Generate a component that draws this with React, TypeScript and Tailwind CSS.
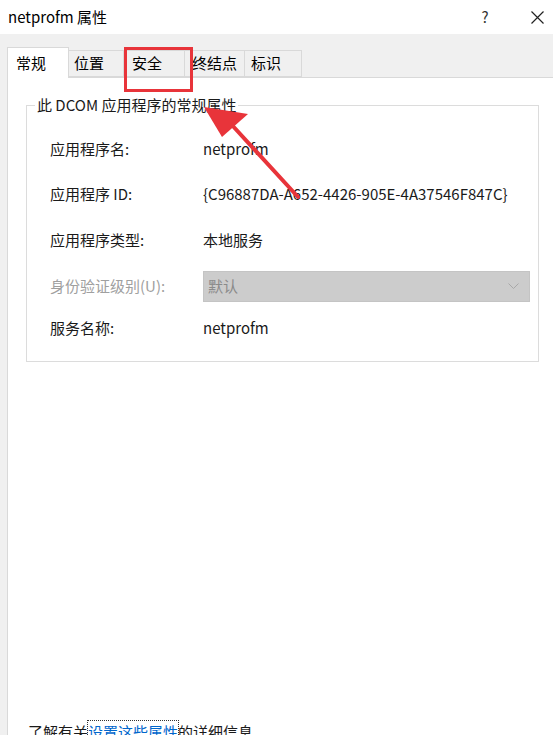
const font = {
  fontFamily: '"Noto Sans CJK SC", "Liberation Sans", sans-serif',
};

const Row = ({ label, value, h }: { label: string; value: string; h: string }) => (
  <div className={`flex items-center ${h}`}>
    <div className="w-[153px] text-[#1a1a1a]">{label}</div>
    <div className="text-[#1a1a1a]">{value}</div>
  </div>
);

const App = () => {
  return (
    <div className="w-[553px] h-[735px] overflow-hidden bg-white relative text-[15px]" style={font}>
      <div className="h-[34px] flex items-center pl-[8px] bg-white">
        <div className="flex-1 text-[15px] text-black">netprofm 属性</div>
        <div className="w-[30px] text-center text-[15px] text-[#333]">?</div>
        <div className="w-[30px] ml-[22px] mr-[1px] flex justify-center">
          <svg width="13" height="13" viewBox="0 0 13 13">
            <path d="M0.5 0.5 L12.5 12.5 M12.5 0.5 L0.5 12.5" stroke="#222" strokeWidth="1.2" />
          </svg>
        </div>
      </div>

      <div className="bg-[#f0f0f0] pl-[7px] h-[701px] flex flex-col">
        <div className="h-[43px] shrink-0 flex items-end">
          <div className="w-[62px] h-[31px] bg-white border border-b-0 border-[#d9d9d9] pl-[8px] flex items-center relative top-[1px]">常规</div>
          <div className="w-[55px] h-[27px] border border-l-0 border-[#d9d9d9] pl-[5px] flex items-center">位置</div>
          <div className="w-[61px] h-[27px] border border-l-0 border-[#d9d9d9] pl-[8px] flex items-center">安全</div>
          <div className="w-[60px] h-[27px] border border-l-0 border-[#d9d9d9] pl-[7px] flex items-center">终结点</div>
          <div className="w-[57px] h-[27px] border border-l-0 border-[#d9d9d9] pl-[6px] flex items-center">标识</div>
        </div>
        <div className="flex-1 min-h-0 overflow-hidden bg-white border-t border-l border-[#d9d9d9] pl-[18px] pt-[16px] flex flex-col">
          <fieldset className="w-[513px] h-[268px] shrink-0 border border-[#dcdcdc] pr-[7px]">
            <legend className="ml-[8px] px-[2px] text-[#1a1a1a]">此 DCOM 应用程序的常规属性</legend>
            <div className="pt-[11px] pl-[23px]">
              <Row label="应用程序名:" value="netprofm" h="h-[44px]" />
              <Row label="应用程序 ID:" value="{C96887DA-A652-4426-905E-4A37546F847C}" h="h-[46px]" />
              <Row label="应用程序类型:" value="本地服务" h="h-[46px]" />
              <div className="flex items-center h-[46px]">
                <div className="w-[153px] text-[#a0a0a0]">身份验证级别(U):</div>
                <div className="w-[327px] h-[31px] bg-[#cccccc] border border-[#c4c4c4] flex items-center pl-[4px] pr-[10px] text-[#8a8a8a]">
                  <span className="flex-1">默认</span>
                  <svg width="11" height="7" viewBox="0 0 11 7">
                    <path d="M0.5 0.5 L5.5 5.5 L10.5 0.5" stroke="#a8a8a8" strokeWidth="1" fill="none" />
                  </svg>
                </div>
              </div>
              <Row label="服务名称:" value="netprofm" h="h-[38px]" />
            </div>
          </fieldset>
          <div className="mt-[359px] shrink-0 pl-[2px] text-[#1a1a1a]">
            了解有关
            <span className="text-[#0066cc] outline outline-1 outline-dotted outline-[#333]">设置这些属性</span>
            的详细信息。
          </div>
        </div>
      </div>

      <div className="absolute left-[124px] top-[47px] w-[69px] h-[45px] border-[3px] border-[#e8343a]" />
      <svg className="absolute left-0 top-0" width="553" height="735" viewBox="0 0 553 735">
        <path d="M298 197 L231 124" stroke="#e8343a" strokeWidth="4" strokeLinecap="round" />
        <path d="M204 107 L248 114 L222 137 Z" fill="#e8343a" />
      </svg>
    </div>
  );
};

export default App;
